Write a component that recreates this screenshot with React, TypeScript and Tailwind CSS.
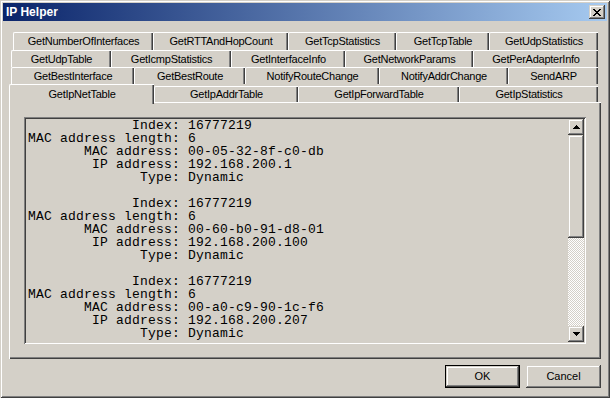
const raised =
  "bg-[#d4d0c8] shadow-[inset_-1px_-1px_#404040,inset_1px_1px_#d4d0c8,inset_-2px_-2px_#808080,inset_2px_2px_#ffffff]";

const tabRows = [
  {
    cls: "flex h-[18px] ml-[4px]",
    tabs: [
      ["GetNumberOfInterfaces", "w-[140px]"],
      ["GetRTTAndHopCount", "w-[135px]"],
      ["GetTcpStatistics", "w-[108px]"],
      ["GetTcpTable", "w-[93px]"],
      ["GetUdpStatistics", "w-[109px]"],
    ],
  },
  {
    cls: "flex h-[17px] ml-[2px]",
    tabs: [
      ["GetUdpTable", "w-[100px]"],
      ["GetIcmpStatistics", "w-[120px]"],
      ["GetInterfaceInfo", "w-[114px]"],
      ["GetNetworkParams", "w-[128px]"],
      ["GetPerAdapterInfo", "w-[125px]"],
    ],
  },
  {
    cls: "flex h-[17px] ml-[2px]",
    tabs: [
      ["GetBestInterface", "w-[123px]"],
      ["GetBestRoute", "w-[111px]"],
      ["NotifyRouteChange", "w-[134px]"],
      ["NotifyAddrChange", "w-[129px]"],
      ["SendARP", "w-[90px]"],
    ],
  },
];

const records = [
  ["16777219", "6", "00-05-32-8f-c0-db", "192.168.200.1", "Dynamic"],
  ["16777219", "6", "00-60-b0-91-d8-01", "192.168.200.100", "Dynamic"],
  ["16777219", "6", "00-a0-c9-90-1c-f6", "192.168.200.207", "Dynamic"],
];

const labels = ["Index", "MAC address length", "MAC address", "IP address", "Type"];

function Tab({ label, w }: { label: string; w: string }) {
  return (
    <div
      className={`${w} h-full flex items-center justify-center border-l border-t border-white rounded-tl-[2px] shadow-[inset_-1px_0_#404040,inset_-2px_0_#808080] text-[11px] tracking-[-0.25px] text-black`}
    >
      {label}
    </div>
  );
}

function CloseGlyph() {
  const px = [
    [0, 0], [1, 0], [6, 0], [7, 0],
    [1, 1], [2, 1], [5, 1], [6, 1],
    [2, 2], [3, 2], [4, 2], [5, 2],
    [3, 3], [4, 3],
    [2, 4], [3, 4], [4, 4], [5, 4],
    [1, 5], [2, 5], [5, 5], [6, 5],
    [0, 6], [1, 6], [6, 6], [7, 6],
  ];
  return (
    <svg width="8" height="7" viewBox="0 0 8 7" shapeRendering="crispEdges">
      {px.map(([x, y]) => (
        <rect key={`${x}-${y}`} x={x} y={y} width="1" height="1" fill="#000" />
      ))}
    </svg>
  );
}

function Arrow({ up }: { up?: boolean }) {
  return (
    <svg width="7" height="4" viewBox="0 0 7 4" shapeRendering="crispEdges">
      <polygon points={up ? "3.5,0 7,4 0,4" : "0,0 7,0 3.5,4"} fill="#000" />
    </svg>
  );
}

export default function App() {
  const lines: string[] = [];
  records.forEach((r, i) => {
    if (i > 0) lines.push("");
    labels.forEach((l, j) => lines.push(`${(l + ":").padStart(19)} ${r[j]}`));
  });

  return (
    <div className="w-[610px] h-[398px] bg-[#d4d0c8] p-[3px] flex flex-col font-['Liberation_Sans',Arial,sans-serif] shadow-[inset_1px_1px_#d4d0c8,inset_-1px_-1px_#404040,inset_2px_2px_#ffffff,inset_-2px_-2px_#808080]">
      <div className="h-[18px] flex items-center justify-between pl-[3px] pr-[2px] bg-[linear-gradient(to_right,#0a246a,#a6caf0)]">
        <span className="text-white font-bold text-[12px] leading-none">IP Helper</span>
        <div className={`w-[16px] h-[14px] flex items-center justify-center ${raised}`}>
          <CloseGlyph />
        </div>
      </div>

      <div className="pl-[6px] pt-[11px]">
        {tabRows.map((row, i) => (
          <div key={i} className={row.cls}>
            {row.tabs.map(([label, w]) => (
              <Tab key={label} label={label} w={w} />
            ))}
          </div>
        ))}
        <div className="flex items-end h-[18px]">
          <div className="w-[145px] h-[20px] -mb-[2px] relative z-10 bg-[#d4d0c8] flex justify-center pt-[3px] border-l border-t border-white rounded-tl-[2px] shadow-[inset_-1px_0_#404040,inset_-2px_0_#808080] text-[11px] leading-[13px] tracking-[-0.25px] text-black">
            GetIpNetTable
          </div>
          <div className="h-[16px] flex">
            <Tab label="GetIpAddrTable" w="w-[144px]" />
            <Tab label="GetIpForwardTable" w="w-[161px]" />
            <Tab label="GetIpStatistics" w="w-[139px]" />
          </div>
        </div>

        <div className="w-[592px] h-[257px] pt-[15px] pl-[15px] shadow-[inset_1px_1px_#ffffff,inset_-1px_-1px_#404040,inset_-2px_-2px_#808080]">
          <div className="w-[562px] h-[227px] p-[2px] flex shadow-[inset_1px_1px_#808080,inset_-1px_-1px_#ffffff,inset_2px_2px_#404040,inset_-2px_-2px_#d4d0c8]">
            <div className="flex-1 overflow-hidden pl-[2px] whitespace-pre font-['Liberation_Mono','Courier_New',monospace] text-[13px] leading-[13px] tracking-[0.2px] text-black">
              {lines.map((l, i) => (
                <div key={i} className="h-[13px]">
                  {l}
                </div>
              ))}
            </div>
            <div className="w-[16px] flex flex-col">
              <div className={`h-[16px] flex items-center justify-center ${raised}`}>
                <Arrow up />
              </div>
              <div className={`h-[103px] ${raised}`} />
              <div className="flex-1 bg-[repeating-conic-gradient(#ffffff_0_25%,#d4d0c8_0_50%)] bg-[length:2px_2px]" />
              <div className={`h-[16px] flex items-center justify-center ${raised}`}>
                <Arrow />
              </div>
            </div>
          </div>
        </div>
      </div>

      <div className="flex justify-end gap-[6px] pr-[6px] mt-[6px]">
        <div className="w-[75px] h-[23px] border border-black">
          <div className={`h-full flex items-center justify-center text-[11px] text-black ${raised}`}>OK</div>
        </div>
        <div className={`w-[75px] h-[23px] flex items-center justify-center text-[11px] text-black ${raised}`}>
          Cancel
        </div>
      </div>
    </div>
  );
}
